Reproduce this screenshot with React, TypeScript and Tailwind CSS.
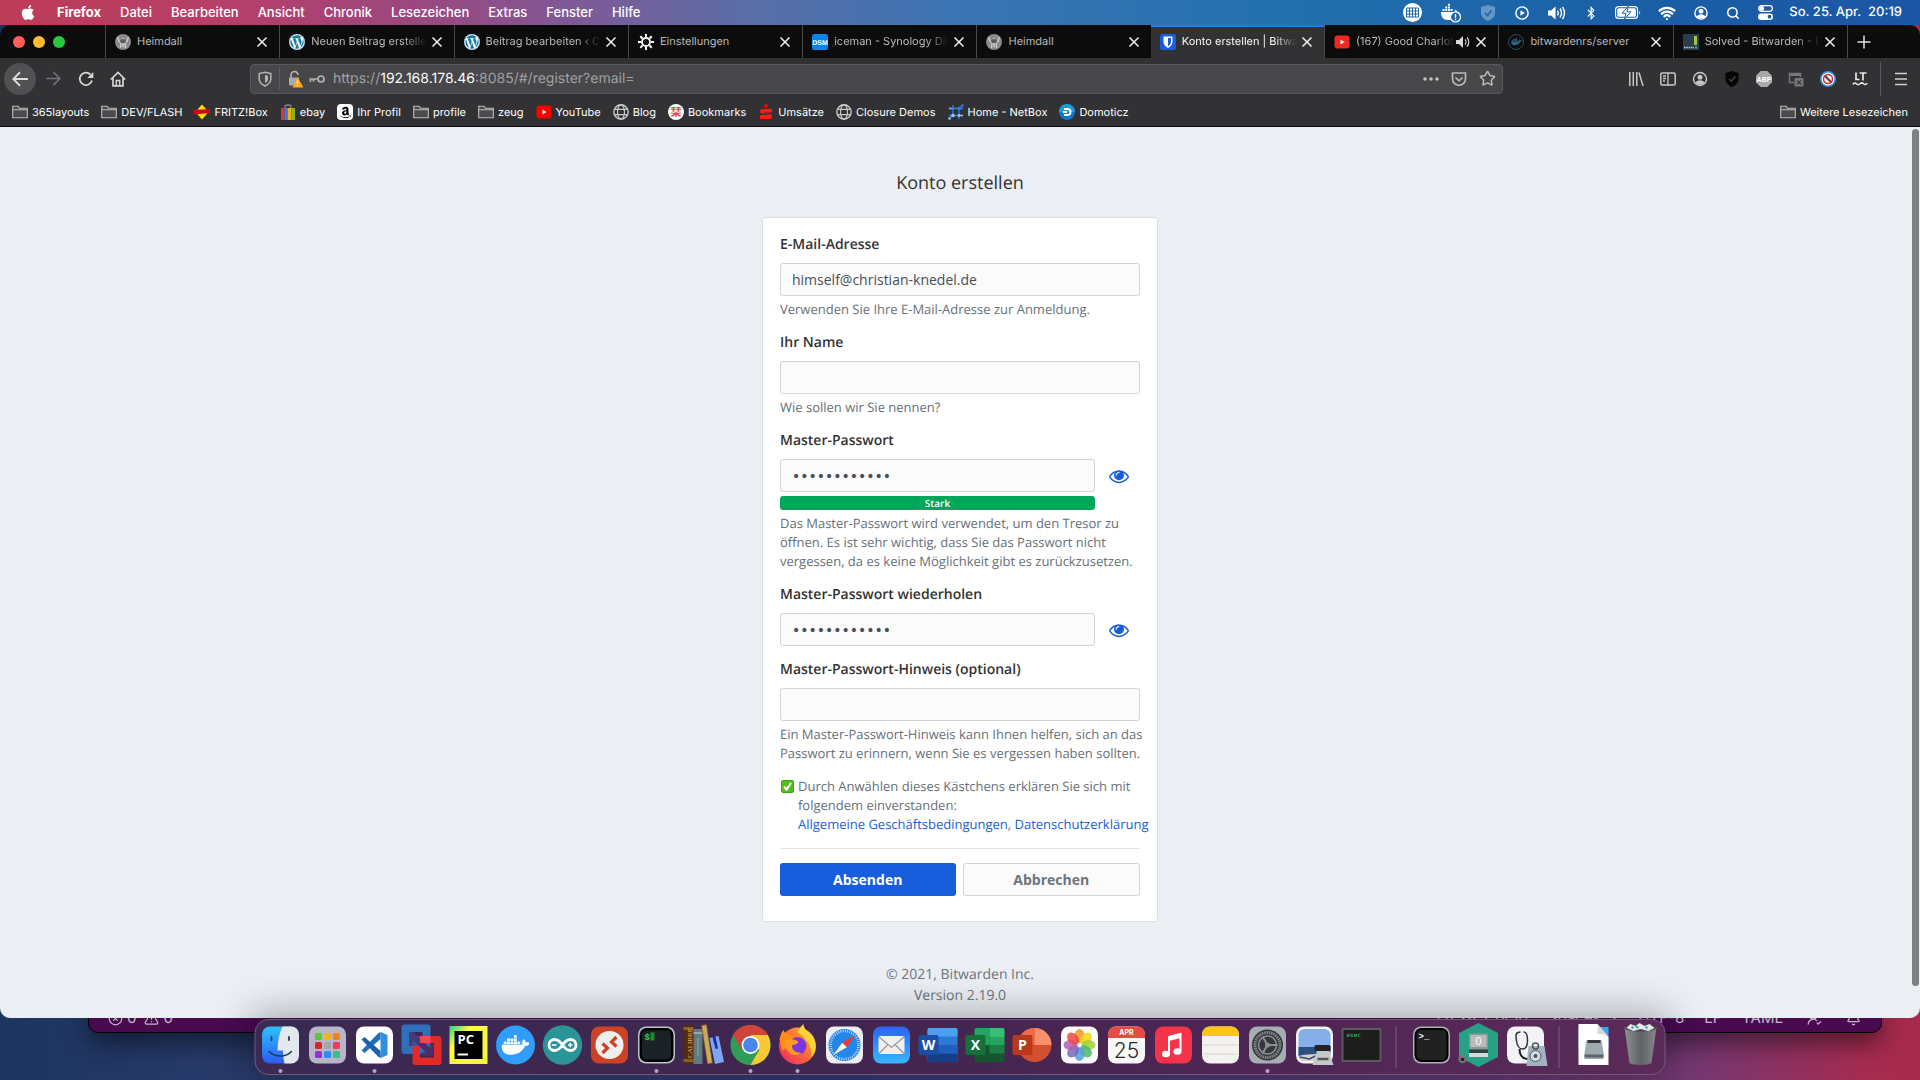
import { useState, type ReactNode } from 'react';
import { FaApple, FaWordpress, FaDocker, FaBluetoothB, FaAmazon } from 'react-icons/fa';
import { Wifi, Search, Star, Bell, CircleX, TriangleAlert, UserRoundCheck } from 'lucide-react';

/* ---------- small line icons ---------- */

const Svg = ({ children, size = 16, box = '0 0 16 16', className = '' }: { children: ReactNode; size?: number; box?: string; className?: string }) => (
  <svg width={size} height={size} viewBox={box} fill="none" className={`shrink-0 ${className}`} aria-hidden="true">
    {children}
  </svg>
);

const CloseIcon = () => (
  <Svg><path d="M3.5 3.5l9 9M12.5 3.5l-9 9" stroke="#f0f0f0" strokeWidth="1.5" /></Svg>
);

const SpeakerIcon = () => (
  <Svg>
    <path d="M1 6v4h3l4 4V2L4 6z" fill="#d8d8d8" />
    <path d="M10 5.500c1.300 1.300 1.300 3.700 0 5M12 3.500c2.400 2.400 2.400 6.600 0 9" stroke="#d8d8d8" strokeWidth="1.200" />
  </Svg>
);

const HelmetIcon = () => (
  <Svg>
    <circle cx="8" cy="8" r="8" fill="#8b8b8b" />
    <path d="M3 3c0 4 1 5 3 5.500L5.500 14M13 3c0 4-1 5-3 5.500l.5 5.500M8 4v9" stroke="#c9c9c9" strokeWidth="1.500" />
    <path d="M5 6.500c2-2 4-2 6 0l-.7 2.500H5.700z" fill="#5a5a5a" />
  </Svg>
);

const GearIcon = () => (
  <Svg>
    <circle cx="8" cy="8" r="4" stroke="#fff" strokeWidth="1.800" />
    <path d="M8 0v3M8 13v3M0 8h3M13 8h3M2.300 2.300l2.200 2.200M11.500 11.500l2.200 2.200M2.300 13.700l2.200-2.200M11.500 4.500l2.200-2.200" stroke="#fff" strokeWidth="2" />
  </Svg>
);

const DsmIcon = () => (
  <Svg>
    <rect width="16" height="16" rx="2" fill="#0a84e8" />
    <text x="8" y="10.500" fontSize="7" fontWeight="700" fill="#fff" textAnchor="middle" fontFamily="Liberation Sans, sans-serif">DSM</text>
  </Svg>
);

const WardenIcon = () => (
  <Svg>
    <rect width="16" height="16" rx="2.500" fill="#175ddc" />
    <path d="M3.500 2.500h9v5.500c0 3-2.500 4.800-4.500 6-2-1.200-4.500-3-4.500-6z" fill="#fff" />
    <path d="M8 4h3v4c0 2-1.500 3.200-3 4.200z" fill="#175ddc" />
  </Svg>
);

const YoutubeTile = ({ color = '#ee2a20' }: { color?: string }) => (
  <Svg>
    <rect x=".5" y="1.500" width="15" height="13" rx="3" fill={color} />
    <path d="M6.500 5.500v5l4-2.500z" fill="#fff" />
  </Svg>
);

const WhaleRing = () => (
  <span className="flex size-4 shrink-0 items-center justify-center rounded-full border border-[#2a4a5e] text-[#2f6384]">
    <FaDocker size={11} />
  </span>
);

const SolvedIcon = () => (
  <Svg>
    <rect width="16" height="16" fill="#2b3c4a" />
    <rect x="11" y="2" width="3" height="9" fill="#9bc53d" />
    <path d="M1 13.500h10" stroke="#c5ccd2" strokeWidth="1.500" strokeDasharray="1.500 .8" />
    <rect x="12" y="12.500" width="2" height="2" fill="#4aa3e0" />
  </Svg>
);

const FolderIcon = () => (
  <Svg>
    <path d="M.7 13.800V2.200h5.300l1.500 2h7.800v9.600z" fill="#4a4a4c" stroke="#bdbdbf" strokeWidth="1.100" />
    <path d="M.7 5.800h14.600" stroke="#bdbdbf" strokeWidth="1.100" />
  </Svg>
);

const GlobeIcon = () => (
  <Svg>
    <circle cx="8" cy="8" r="7.200" stroke="#c9c9cb" strokeWidth="1.400" />
    <ellipse cx="8" cy="8" rx="3.500" ry="7.200" stroke="#c9c9cb" strokeWidth="1.200" />
    <path d="M1.500 5.300h13M1.500 10.700h13" stroke="#c9c9cb" strokeWidth="1.200" />
  </Svg>
);

const FritzIcon = () => (
  <Svg>
    <path d="M8 .5L14.500 8 8 15.500 1.500 8z" fill="#ffe100" />
    <path d="M0 6l16-1v4L0 10.500z" fill="#e2001a" />
    <path d="M2 8.500l2-2M5 8.500l1-2M8 8.500l1-2M11 8.500l2-2.500" stroke="#7a1020" strokeWidth="1" />
  </Svg>
);

const BagIcon = () => (
  <Svg>
    <path d="M5 5V2.500C5 .5 11 .5 11 2.500V5" stroke="#8c8c8e" strokeWidth="1.300" />
    <path d="M1 4h3.500v12H1z" fill="#e53238" />
    <path d="M4.500 4H8v12H4.500z" fill="#3d7fe0" />
    <path d="M8 4h3.500v12H8z" fill="#f5af02" />
    <path d="M11.500 4H15v12h-3.500z" fill="#86b817" />
  </Svg>
);

const AmazonIcon = () => (
  <span className="flex size-4 shrink-0 items-center justify-center rounded-sm bg-white text-black"><FaAmazon size={13} /></span>
);

const ShioriIcon = () => (
  <Svg>
    <circle cx="8" cy="8" r="8" fill="#fff" />
    <text x="8" y="12" fontSize="11" fontWeight="700" fill="#e5484d" textAnchor="middle" fontFamily="Noto Sans CJK JP, sans-serif">栞</text>
  </Svg>
);

const SparkasseIcon = () => (
  <Svg>
    <circle cx="8" cy="2" r="2" fill="#f00" />
    <path d="M14 5H4.500C3 5 2 5.900 2 7.300S3 9.600 4.500 9.600h6v1.300H2V15h9.500c1.600 0 2.500-1 2.500-2.500s-.9-2.600-2.500-2.600H6V8.500h8z" fill="#ff1b10" />
  </Svg>
);

const NetboxIcon = () => (
  <Svg>
    <path d="M5 1v10.500M11 4.500V15M1 11.500h10.500M4.500 4.500H15M5 11.500l-3.500 3M11 4.500l3.500-3" stroke="#2f7fe0" strokeWidth="1.300" />
    <path d="M11 11.500h4M5 4.500H1" stroke="#8fc4ff" strokeWidth="1.300" />
    <circle cx="5" cy="11.500" r="1.800" fill="#8fc4ff" /><circle cx="11" cy="4.500" r="1.800" fill="#2f7fe0" />
    <circle cx="5" cy="4.500" r="1.400" fill="#2f7fe0" /><circle cx="11" cy="11.500" r="1.400" fill="#8fc4ff" />
    <circle cx="1.500" cy="14.500" r="1.300" fill="#8fc4ff" /><circle cx="14.500" cy="1.500" r="1.300" fill="#2f7fe0" />
  </Svg>
);

const DomoticzIcon = () => (
  <Svg>
    <circle cx="8" cy="8" r="8" fill="#0b78c8" />
    <path d="M0 8a8 8 0 0 1 16 0z" fill="#1d9ad8" />
    <path d="M5 5h3.500a3 3 0 0 1 0 6H5M4 8h4" stroke="#fff" strokeWidth="2" />
  </Svg>
);

const EyeIcon = () => (
  <svg width="20" height="20" viewBox="0 0 1792 1792" fill="#175ddc" aria-hidden="true">
    <path d="M1664 960q-152-236-381-353 61 104 61 225 0 185-131.500 316.500t-316.500 131.500-316.500-131.500-131.500-316.500q0-121 61-225-229 117-381 353 133 205 333.500 326.500t434.500 121.500 434.500-121.500 333.500-326.500zm-720-384q0-20-14-34t-34-14q-125 0-214.500 89.500t-89.500 214.500q0 20 14 34t34 14 34-14 14-34q0-86 61-147t147-61q20 0 34-14t14-34zm848 384q0 34-20 69-140 230-376.500 368.500t-499.500 138.500-499.500-139-376.500-368q-20-35-20-69t20-69q140-229 376.500-368t499.500-139 499.500 139 376.500 368q20 35 20 69z" />
  </svg>
);

/* ---------- system menu bar ---------- */

const MENUS = ['Datei', 'Bearbeiten', 'Ansicht', 'Chronik', 'Lesezeichen', 'Extras', 'Fenster', 'Hilfe'];

function MenuBar() {
  return (
    <header className="flex h-[25px] items-center justify-between bg-[linear-gradient(to_right,#be3c57_0%,#b53f69_12%,#9a4880_22%,#7a5c98_31%,#5a6ea8_39%,#3b74b4_50%,#2270ae_67%,#1a5fa6_85%,#1c56a5_100%)] pr-[18px] pl-[20px] text-[13px] text-white">
      <nav className="flex items-center gap-[19px] font-medium" aria-label="Menü">
        <button type="button" aria-label="Apple" className="mr-[2px] flex w-4 justify-center"><FaApple size={17} /></button>
        <button type="button" className="font-bold">Firefox</button>
        {MENUS.map((m) => <button type="button" key={m}>{m}</button>)}
      </nav>
      <div className="flex items-center gap-4">
        <span className="flex w-[22px] justify-center">
          <Svg size={19} box="0 0 19 19">
            <circle cx="9.500" cy="9.500" r="9.500" fill="#fff" />
            <path d="M3.500 5h12v9h-12zM3.500 8h12M3.500 11h12M6.500 5v9M9.500 5v9M12.500 5v9" stroke="#2368ab" strokeWidth="1" />
          </Svg>
        </span>
        <span className="flex w-6 justify-center">
          <Svg size={20} box="0 0 20 20">
            <path d="M0 9h13c1 0 1.500-1 1.300-2.500 1.200.6 1.700 1.500 1.700 2.200 1 0 1.700 0 2.500.5-.8 1.500-2 1.800-3.200 1.800-1.300 4-4.300 6-8.300 6C2 17 0 13.500 0 9z" fill="#fff" />
            <path d="M1.500 6h2v2h-2zM4.200 6h2v2h-2zM6.900 6h2v2h-2zM9.600 6h2v2h-2zM4.200 3.400h2v2h-2zM6.900 3.400h2v2h-2zM6.900.8h2v2h-2z" fill="#fff" />
            <circle cx="14.500" cy="14" r="5" fill="#1f66a9" stroke="#fff" strokeWidth="1.200" />
            <path d="M14.500 11v3.800M14.500 15.800v1.400" stroke="#fff" strokeWidth="1.400" />
          </Svg>
        </span>
        <span className="flex w-[18px] justify-center opacity-40">
          <Svg><path d="M8 0l7 2v6c0 4-3.500 6.500-7 8-3.500-1.500-7-4-7-8V2z" fill="#cfe0f0" /><path d="M5 8l2.500 2.500L11.500 5.500" stroke="#1d5fa0" strokeWidth="1.600" /></Svg>
        </span>
        <span className="flex w-[18px] justify-center">
          <Svg size={14}><circle cx="8" cy="8" r="7" stroke="#fff" strokeWidth="1.700" /><path d="M6.200 4.800v6.400L11.300 8z" fill="#fff" /></Svg>
        </span>
        <span className="flex w-5 justify-center">
          <Svg size={18} box="0 0 18 16">
            <path d="M0 5.500v5h3l4.500 4V1.500L3 5.500z" fill="#fff" />
            <path d="M9.500 5.500q1.500 2.500 0 5M12 3.500q3 4.500 0 9M14.500 2q4 6 0 12" stroke="#fff" strokeWidth="1.400" />
          </Svg>
        </span>
        <span className="flex w-4 justify-center"><FaBluetoothB size={14} /></span>
        <span className="flex w-[26px] justify-center">
          <svg width="26" height="13" viewBox="0 0 26 13" fill="none" aria-hidden="true">
            <rect x=".6" y=".6" width="22" height="11.800" rx="3" stroke="#fff" strokeWidth="1.100" />
            <rect x="2.300" y="2.300" width="18.600" height="8.400" rx="1.500" fill="#fff" />
            <path d="M13.500 0L7 7.200h4L9.500 13 16 5.800h-4z" fill="#fff" stroke="#2064a8" strokeWidth="1" />
            <path d="M24.300 4.500q1.600 2 0 4" fill="#fff" />
          </svg>
        </span>
        <span className="flex w-5 justify-center"><Wifi size={18} strokeWidth={3} /></span>
        <span className="flex w-4 justify-center">
          <Svg size={14}><circle cx="8" cy="8" r="7" stroke="#fff" strokeWidth="1.600" /><circle cx="8" cy="6" r="2.800" fill="#fff" /><path d="M3 12.500c1-4 9-4 10 0-2.500 2.500-7.500 2.500-10 0z" fill="#fff" /></Svg>
        </span>
        <span className="flex w-4 justify-center"><Search size={14} strokeWidth={2.600} /></span>
        <span className="flex w-4 justify-center">
          <Svg size={15}>
            <rect x=".7" y=".7" width="14.600" height="6" rx="3" stroke="#fff" strokeWidth="1.300" /><circle cx="4" cy="3.700" r="2.600" fill="#fff" />
            <rect x="0" y="9" width="16" height="7" rx="3.500" fill="#fff" /><circle cx="12.300" cy="12.500" r="2" fill="#1c5da5" />
          </Svg>
        </span>
        <span className="font-medium whitespace-pre">So. 25. Apr.  20:19</span>
      </div>
    </header>
  );
}

/* ---------- browser chrome ---------- */

type Tab = { title: string; icon: ReactNode; active?: boolean; sound?: boolean; fade?: boolean };

const wp = (
  <span className="flex size-4 shrink-0 rounded-full bg-white text-[#1779a5]"><FaWordpress size={16} /></span>
);

const TABS: Tab[] = [
  { title: 'Heimdall', icon: <HelmetIcon /> },
  { title: 'Neuen Beitrag erstellen', icon: wp, fade: true },
  { title: 'Beitrag bearbeiten ‹ Christian', icon: wp, fade: true },
  { title: 'Einstellungen', icon: <GearIcon /> },
  { title: 'iceman - Synology DiskStation', icon: <DsmIcon />, fade: true },
  { title: 'Heimdall', icon: <HelmetIcon /> },
  { title: 'Konto erstellen | Bitwarden', icon: <WardenIcon />, active: true, fade: true },
  { title: '(167) Good Charlotte', icon: <YoutubeTile />, sound: true, fade: true },
  { title: 'bitwardenrs/server', icon: <WhaleRing /> },
  { title: 'Solved - Bitwarden - Error', icon: <SolvedIcon />, fade: true },
];

function TabStrip() {
  return (
    <div className="flex h-[33px] bg-[#0c0c0d]">
      <div className="flex w-[105px] items-center gap-2 pl-[13px]">
        <span className="size-3 rounded-full bg-[#ff5f57]" />
        <span className="size-3 rounded-full bg-[#febc2e]" />
        <span className="size-3 rounded-full bg-[#28c840]" />
      </div>
      {TABS.map((t, i) => (
        <div
          key={i}
          className={`flex min-w-0 flex-1 items-center pr-[9px] pl-[9px] text-[11px] ${t.active ? 'border-t-2 border-t-[#0a84ff] bg-[#323234] pb-[2px] text-[#f9f9fa]' : 'border-l border-l-[#4a4a4b] text-[#b9b9ba]'}`}
        >
          {t.icon}
          <span className={`ml-[6px] min-w-0 flex-1 overflow-hidden whitespace-nowrap ${t.fade ? '[mask-image:linear-gradient(to_right,black_80%,transparent_100%)]' : ''}`}>{t.title}</span>
          {t.sound && <SpeakerIcon />}
          <button type="button" aria-label="Tab schließen" className="ml-[2px]"><CloseIcon /></button>
        </div>
      ))}
      <button type="button" aria-label="Neuer Tab" className="flex w-[73px] items-center border-l border-l-[#4a4a4b] pl-2">
        <Svg><path d="M8 1.500v13M1.500 8h13" stroke="#e0e0e0" strokeWidth="1.500" /></Svg>
      </button>
    </div>
  );
}

const TOOLBAR: { label: string; icon: ReactNode }[] = [
  { label: 'Bibliothek', icon: <Svg><path d="M1.800 1v14M5.300 1v14M8.800 1v14M11 1.500l4 13.500" stroke="#c8c8c9" strokeWidth="1.500" /></Svg> },
  { label: 'Seitenleiste', icon: <Svg><rect x=".8" y="2" width="14.400" height="12" rx="1.500" stroke="#c8c8c9" strokeWidth="1.500" /><path d="M8 2v12M3 5h3M3 7.500h3M3 10h2" stroke="#c8c8c9" strokeWidth="1.300" /></Svg> },
  { label: 'Konto', icon: <Svg><circle cx="8" cy="8" r="6.500" stroke="#c8c8c9" strokeWidth="1.400" /><circle cx="8" cy="6.300" r="2.500" fill="#c8c8c9" /><path d="M3.500 11.800c1-3.500 8-3.500 9 0-2 2.500-7 2.500-9 0z" fill="#c8c8c9" /></Svg> },
  { label: 'Schutz', icon: <Svg><path d="M8 0l6.500 2v6c0 4-3 6.500-6.500 8-3.500-1.500-6.500-4-6.500-8V2z" fill="#050505" /><path d="M5 8l2.300 2.300L11.500 5.500" stroke="#444" strokeWidth="1.400" /></Svg> },
  { label: 'Adblock', icon: <Svg><path d="M4.700 0h6.600L16 4.700v6.600L11.300 16H4.700L0 11.300V4.700z" fill="#a9a9aa" /><text x="8" y="10.700" fontSize="7" fontWeight="700" fill="#fff" textAnchor="middle" fontFamily="Liberation Sans, sans-serif">ABP</text></Svg> },
  { label: 'Fenster', icon: <Svg><path d="M6 11.500H1.500v-9h11V6" stroke="#777779" strokeWidth="1.500" /><path d="M1 4h12" stroke="#777779" strokeWidth="2" /><rect x="6.500" y="7" width="9" height="8.500" rx="1" fill="#777779" /><path d="M9 9.300l4 4M13 9.300l-4 4" stroke="#323234" strokeWidth="1.200" /></Svg> },
  { label: 'Blocker', icon: <Svg><circle cx="8" cy="8" r="7.200" fill="#fff" stroke="#3d8be0" strokeWidth="1.600" /><circle cx="8" cy="8" r="4.500" stroke="#c0392b" strokeWidth="1.500" /><path d="M5 5l6 6" stroke="#8a2430" strokeWidth="2" /></Svg> },
  { label: 'LanguageTool', icon: <Svg><path d="M4 1.500v7h3.500M7.500 2h7M11 2v7.500" stroke="#e8e8e8" strokeWidth="1.700" /><path d="M.8 13.500q1.800-2.500 3.600-.7t3.600 0 3.600 0 3.600-.7" stroke="#e8e8e8" strokeWidth="1.600" /></Svg> },
];

function NavBar() {
  return (
    <div className="flex h-[41px] items-center bg-[#323234] pl-1">
      <button type="button" aria-label="Zurück" className="flex size-8 items-center justify-center rounded-full bg-[#515153]">
        <Svg size={18}><path d="M15 8H2M8 2L2 8l6 6" stroke="#dcdcdd" strokeWidth="1.600" /></Svg>
      </button>
      <button type="button" aria-label="Vor" className="flex h-8 w-[34px] items-center justify-center">
        <Svg size={17}><path d="M1 8h13M8 2l6 6-6 6" stroke="#747476" strokeWidth="1.500" /></Svg>
      </button>
      <button type="button" aria-label="Neu laden" className="flex size-8 items-center justify-center">
        <Svg><path d="M14 9.500a6.200 6.200 0 1 1-1.600-6" stroke="#d5d5d6" strokeWidth="1.800" /><path d="M15.300 1v6H9.300z" fill="#d5d5d6" /></Svg>
      </button>
      <button type="button" aria-label="Startseite" className="flex size-8 items-center justify-center">
        <Svg><path d="M.8 8.500L8 1.500l7.200 7M3 7v7.800h10V7" stroke="#d5d5d6" strokeWidth="1.700" /><path d="M6.300 14.500V9.500h3.400v5" stroke="#d5d5d6" strokeWidth="1.500" /></Svg>
      </button>
      <div className="ml-[116px] flex h-[30px] min-w-0 flex-1 items-center rounded border border-[#59595b] bg-[#474749] px-[6px]">
        <Svg><path d="M8 1.200l5.800 1.300v5.500c0 3.500-2.800 5.500-5.800 7-3-1.500-5.800-3.500-5.800-7V2.500z" stroke="#b5b5b6" strokeWidth="1.500" /><path d="M8 4l3 .7V8c0 2-1.500 3.200-3 4z" fill="#b5b5b6" /></Svg>
        <span className="mx-[6px] h-[22px] w-px bg-[#5e5e62]" />
        <Svg size={18} box="0 0 18 18">
          <path d="M5 8V5a3.500 3.500 0 0 1 7 0" stroke="#b5b5b6" strokeWidth="1.700" /><rect x="3" y="7.500" width="10" height="8" rx="1" fill="#a9a9aa" />
          <path d="M11.500 7l6 10.500h-11z" fill="#ffa81c" /><path d="M11.500 10.500v3.500M11.500 15v1.300" stroke="#fff" strokeWidth="1.300" />
        </Svg>
        <Svg className="ml-[5px]"><circle cx="12" cy="8" r="3" stroke="#b5b5b6" strokeWidth="1.700" /><path d="M9 8H.5M1.500 8v3M4.500 8v2.500" stroke="#b5b5b6" strokeWidth="1.700" /></Svg>
        <span className="ml-[8px] min-w-0 flex-1 truncate text-[14px] text-[#a0a0a2]">https://<span className="text-[#f9f9fa]">192.168.178.46</span>:8085/#/register?email=</span>
        <div className="flex items-center gap-3">
          <Svg><circle cx="2" cy="8" r="1.800" fill="#c4c4c5" /><circle cx="8" cy="8" r="1.800" fill="#c4c4c5" /><circle cx="14" cy="8" r="1.800" fill="#c4c4c5" /></Svg>
          <Svg><path d="M1.500 2h13v6c0 3.500-3 6.300-6.500 6.300S1.500 11.500 1.500 8z" stroke="#b9b9ba" strokeWidth="1.700" /><path d="M4.500 6.500L8 9.800l3.500-3.300" stroke="#b9b9ba" strokeWidth="1.700" /></Svg>
          <Star size={17} strokeWidth={2.200} color="#b9b9ba" />
        </div>
      </div>
      <div className="ml-[125px] flex items-center gap-4">
        {TOOLBAR.map((t) => <button type="button" key={t.label} aria-label={t.label}>{t.icon}</button>)}
      </div>
      <span className="ml-3 h-[34px] w-px bg-[#5a5a5c]" />
      <button type="button" aria-label="Menü öffnen" className="mr-[11px] ml-[12px]">
        <Svg><path d="M2 2.500h12M2 8h12M2 13.500h12" stroke="#d0d0d1" strokeWidth="1.700" /></Svg>
      </button>
    </div>
  );
}

const BOOKMARKS: { label: string; icon: ReactNode }[] = [
  { label: '365layouts', icon: <FolderIcon /> },
  { label: 'DEV/FLASH', icon: <FolderIcon /> },
  { label: 'FRITZ!Box', icon: <FritzIcon /> },
  { label: 'ebay', icon: <BagIcon /> },
  { label: 'Ihr Profil', icon: <AmazonIcon /> },
  { label: 'profile', icon: <FolderIcon /> },
  { label: 'zeug', icon: <FolderIcon /> },
  { label: 'YouTube', icon: <YoutubeTile color="#ff0000" /> },
  { label: 'Blog', icon: <GlobeIcon /> },
  { label: 'Bookmarks', icon: <ShioriIcon /> },
  { label: 'Umsätze', icon: <SparkasseIcon /> },
  { label: 'Closure Demos', icon: <GlobeIcon /> },
  { label: 'Home - NetBox', icon: <NetboxIcon /> },
  { label: 'Domoticz', icon: <DomoticzIcon /> },
];

function BookmarkBar() {
  return (
    <div className="flex h-7 items-center gap-3 border-b border-[#0c0c0d] bg-[#323234] px-3 pb-px text-[11px] text-[#ffffff]">
      {BOOKMARKS.map((b) => (
        <a key={b.label} href="#" className="flex items-center gap-1 whitespace-nowrap">{b.icon}{b.label}</a>
      ))}
      <a href="#" className="ml-auto flex items-center gap-1 whitespace-nowrap"><FolderIcon />Weitere Lesezeichen</a>
    </div>
  );
}

/* ---------- registration page ---------- */

const inputClass = 'block h-[33px] w-full rounded-[3px] border border-[#ced4dc] bg-[#fbfbfb] px-[11px] text-[14px] text-[#465057] outline-none';
const labelClass = 'mb-2 block text-[14px] leading-5 font-semibold text-[#333]';
const hintClass = 'mt-1 whitespace-nowrap text-[13px] leading-[19px] text-[#667079]';

function PasswordField({ id, label, meter, children }: { id: string; label: string; meter?: boolean; children?: ReactNode }) {
  const [shown, setShown] = useState(false);
  return (
    <div>
      <label htmlFor={id} className={labelClass}>{label}</label>
      <div className="flex">
        <div className="flex-1">
          <input id={id} type={shown ? 'text' : 'password'} defaultValue="abcdefghijkl" className={`${inputClass} font-['DejaVu_Sans',sans-serif]`} />
          {meter && <div className="mt-1 h-[14px] rounded-[3px] bg-[#00a65a] text-center text-[10px] leading-[14px] font-semibold text-white">Stark</div>}
        </div>
        <button type="button" aria-label="Passwort anzeigen" onClick={() => setShown(!shown)} className="flex h-[33px] w-[45px] items-center justify-end pr-[11px]"><EyeIcon /></button>
      </div>
      {children}
    </div>
  );
}

function RegisterForm() {
  return (
    <form className="mx-auto w-[396px] rounded-[3px] border border-[#dcdfe4] bg-white px-[17px] pt-[17px] pb-[25px]" onSubmit={(e) => e.preventDefault()}>
      <div className="flex flex-col gap-[14px]">
        <div>
          <label htmlFor="email" className={labelClass}>E-Mail-Adresse</label>
          <input id="email" type="email" defaultValue="himself@christian-knedel.de" className={inputClass} />
          <p className={hintClass}>Verwenden Sie Ihre E-Mail-Adresse zur Anmeldung.</p>
        </div>
        <div>
          <label htmlFor="name" className={labelClass}>Ihr Name</label>
          <input id="name" type="text" className={inputClass} />
          <p className={hintClass}>Wie sollen wir Sie nennen?</p>
        </div>
        <PasswordField id="pw" label="Master-Passwort" meter>
          <p className={hintClass}>Das Master-Passwort wird verwendet, um den Tresor zu<br />öffnen. Es ist sehr wichtig, dass Sie das Passwort nicht<br />vergessen, da es keine Möglichkeit gibt es zurückzusetzen.</p>
        </PasswordField>
        <PasswordField id="pw2" label="Master-Passwort wiederholen" />
        <div>
          <label htmlFor="hint" className={labelClass}>Master-Passwort-Hinweis (optional)</label>
          <input id="hint" type="text" className={inputClass} />
          <p className={hintClass}>Ein Master-Passwort-Hinweis kann Ihnen helfen, sich an das<br />Passwort zu erinnern, wenn Sie es vergessen haben sollten.</p>
        </div>
        <div className="flex text-[13px] leading-[19px] text-[#667079]">
          <span className="relative mt-[3px] mr-[4px] ml-px size-[13px] shrink-0">
            <input id="terms" type="checkbox" defaultChecked className="block size-[13px] appearance-none rounded-[2px] border border-[#3aa80f] bg-[#55bd22]" />
            <Svg size={13} box="0 0 13 13" className="pointer-events-none absolute inset-0"><path d="M3 6.500l2.500 3L10 3" stroke="#fff" strokeWidth="2" /></Svg>
          </span>
          <div className="whitespace-nowrap">
            <label htmlFor="terms">Durch Anwählen dieses Kästchens erklären Sie sich mit<br />folgendem einverstanden:</label>
            <div><a href="#" className="text-[#175ddc]">Allgemeine Geschäftsbedingungen</a>, <a href="#" className="text-[#175ddc]">Datenschutzerklärung</a></div>
          </div>
        </div>
      </div>
      <hr className="my-[14px] border-[#e2e3e5]" />
      <div className="flex gap-[7px] text-[14px] font-bold">
        <button type="submit" className="h-[33px] flex-1 rounded-[3px] bg-[#175ddc] text-white">Absenden</button>
        <button type="button" className="h-[33px] flex-1 rounded-[3px] border border-[#ced4dc] bg-[#fbfbfb] text-[#6c757d]">Abbrechen</button>
      </div>
    </form>
  );
}

function Page() {
  return (
    <main className="flex flex-1 bg-[#ebeef3] font-['Open_Sans',sans-serif]">
      <div className="flex-1 pt-[44px] text-center">
        <h1 className="mb-[22px] text-[18px] leading-6 text-[#333]">Konto erstellen</h1>
        <div className="text-left"><RegisterForm /></div>
        <footer className="mt-[42px] text-[14px] leading-[21px] text-[#6c757d]">© 2021, Bitwarden Inc.<br />Version 2.19.0</footer>
      </div>
      <div className="absolute top-[104px] right-px bottom-8 w-[7px] rounded-full bg-[#7d7f81]" />
    </main>
  );
}

/* ---------- dock ---------- */

const Tile = ({ fill, children }: { fill: string; children?: ReactNode }) => (
  <><rect x="1.500" y="3.500" width="37" height="37" rx="8" fill={fill} />{children}</>
);

const squares = ['#55c936', '#f3b321', '#f0851e', '#d42a26', '#a4a6ab', '#f5385a', '#8e35d8', '#2a8ef5', '#35c287'];
const petals = ['#f7941d', '#f1d80d', '#a4ce39', '#4db76a', '#4fa0dc', '#7a68bd', '#b55cae', '#ef4a44'];

const LETTER = 'Open Sans, sans-serif';

const Office = ({ dark, mid, a, b, c, letter }: { dark: string; mid: string; a: string; b: string; c: string; letter: string }) => (
  <>
    <rect x="9" y="5" width="30" height="34" rx="2" fill={b} />
    <path d="M9 7a2 2 0 0 1 2-2h26a2 2 0 0 1 2 2v6.500H9z" fill={a} />
    <rect x="9" y="22" width="30" height="8.500" fill={mid} />
    <path d="M9 30.500h30V37a2 2 0 0 1-2 2H11a2 2 0 0 1-2-2z" fill={c} />
    <rect x="0" y="12" width="20" height="20" rx="2" fill={dark} />
    <text x="10" y="27" fontSize="14" fontWeight="700" fill="#fff" textAnchor="middle" fontFamily={LETTER}>{letter}</text>
  </>
);

type DockItem = { name: string; art: ReactNode; running?: boolean };

const APPS: DockItem[] = [
  { name: 'Finder', running: true, art: (
    <><Tile fill="url(#finder)" />
      <path d="M22 3.500h8.500a8 8 0 0 1 8 8v21a8 8 0 0 1-8 8H24c-1-4-1.500-8-1.500-13H17C17 18 19 10 22 3.500z" fill="#e3e8ef" />
      <path d="M11 14v3M28.500 14v3" stroke="#22384f" strokeWidth="1.800" strokeLinecap="round" />
      <path d="M8.500 28.500c6 6 17 6 22.500 0" stroke="#22384f" strokeWidth="1.500" fill="none" strokeLinecap="round" /></>
  ) },
  { name: 'Launchpad', art: <Tile fill="#b9b4c6">{squares.map((c, i) => <rect key={c} x={7.5 + (i % 3) * 9} y={10 + Math.floor(i / 3) * 9} width="7" height="7" rx="1.500" fill={c} />)}</Tile> },
  { name: 'Visual Studio Code', running: true, art: (
    <Tile fill="#fff"><path d="M26 9l7 3v20l-7 3z" fill="#2f8fe0" /><path d="M26 9v7L10 30l-3-2.500L24 10z" fill="#1f6fbe" /><path d="M26 35v-7L10 14l-3 2.500L24 34z" fill="#1a62ab" /></Tile>
  ) },
  { name: 'VMware Fusion', art: (
    <>
      <path fillRule="evenodd" d="M3 1.500h23a3 3 0 0 1 3 3V28a3 3 0 0 1-3 3H3a3 3 0 0 1-3-3V4.500a3 3 0 0 1 3-3zM8 9v14h13V9z" fill="#2f70bb" />
      <path fillRule="evenodd" d="M14 13h23a3 3 0 0 1 3 3v23a3 3 0 0 1-3 3H14a3 3 0 0 1-3-3V16a3 3 0 0 1 3-3zM18.500 20v14.500h14V20z" fill="#e02b29" />
      <path d="M11 13h10v10H11z" fill="#2a5aa5" />
      <path d="M8 23l0-14 4 0 16 15.500V21h3.500v12H20v-3.500h4L11 16v7z" fill="#413a78" />
      <path d="M18.500 13H29v-1l0 8H18.500z" fill="#ee4b47" />
      <path d="M19 20h4l6 6v-5h3v12H20v-3h5l-7-7z" fill="#4a2f66" />
    </>
  ) },
  { name: 'PyCharm', art: (
    <><rect x="1" y="3" width="38" height="38" fill="url(#pycharm)" /><rect x="6" y="8" width="28" height="28" fill="#000" />
      <text x="9" y="21" fontSize="13" fontWeight="700" fill="#fff" fontFamily={LETTER}>PC</text><path d="M9 31.500h10.500" stroke="#fff" strokeWidth="2" /></>
  ) },
  { name: 'Docker', art: <><circle cx="20" cy="22" r="19.500" fill="#2f9dfb" /><g transform="translate(6 8)"><FaDocker size={28} color="#fff" /></g></> },
  { name: 'Arduino', art: (
    <><circle cx="20" cy="22" r="19.700" fill="#2b9499" /><path d="M20 22c-3-4.500-5-5.500-8-5.500a5.500 5.500 0 0 0 0 11c3 0 5-1 8-5.500s5-5.500 8-5.500a5.500 5.500 0 0 1 0 11c-3 0-5-1-8-5.500z" stroke="#fff" strokeWidth="2.800" fill="none" />
      <path d="M9.500 22h4.500M25.500 22H30M27.800 19.800v4.400" stroke="#fff" strokeWidth="1.400" /></>
  ) },
  { name: 'Remote Desktop', art: <Tile fill="#cb4324"><circle cx="20" cy="22" r="14" fill="#f1efee" /><path d="M13 20.500l5 4.500-5 5M27 14l-5 5 5 4.500" stroke="#cb4324" strokeWidth="3.200" fill="none" /></Tile> },
  { name: 'iTerm', running: true, art: (
    <><Tile fill="#b9c6c9" /><rect x="3" y="5" width="34" height="34" rx="7" fill="#000" /><rect x="5.500" y="7.500" width="29" height="29" rx="4.500" fill="#1a2127" />
      <text x="8" y="17" fontSize="9" fontWeight="700" fill="#2fd445" fontFamily="Liberation Mono, monospace">$</text><rect x="14" y="9.500" width="4" height="8" fill="#1d8a2a" /></>
  ) },
  { name: 'Calibre', art: (
    <><rect x="0" y="2" width="10" height="39" fill="#4f2c12" /><rect x="0" y="4" width="10" height="3" fill="#8a5d22" /><rect x="0" y="36" width="10" height="3" fill="#8a5d22" />
      <text transform="translate(8 35) rotate(-90)" fontSize="7" fill="#e6b54a" fontFamily="Liberation Serif, serif">CALIBRE</text>
      <rect x="10" y="6" width="9" height="35" fill="#5f7b80" /><rect x="10" y="9" width="9" height="2" fill="#93a9ab" /><path d="M14.500 15v18" stroke="#93a9ab" />
      <path d="M18 2.500l5-1L29 40l-5 1z" fill="#caa95e" stroke="#6b5423" strokeWidth=".7" /><path d="M26 15l9-2 5.500 26-9 2z" fill="#7fa6f5" /><path d="M29 14.300l3-.7 2.500 12-2.500.5z" fill="#1c2f9e" /></>
  ) },
  { name: 'Chrome', running: true, art: (
    <><circle cx="20" cy="22" r="20" fill="#2f9e55" /><path d="M20 22L2.700 12A20 20 0 0 1 37.300 12z" fill="#cf4339" /><path d="M20 12h17.300A20 20 0 0 1 20 42l8.700-15z" fill="#f8c935" />
      <path d="M2.700 12L11.300 27 20 22V12h17.300A20 20 0 0 0 2.700 12z" fill="#cf4339" /><circle cx="20" cy="22" r="9" fill="#fff" /><circle cx="20" cy="22" r="7.300" fill="#4a86ea" /></>
  ) },
  { name: 'Firefox', running: true, art: (
    <><circle cx="20" cy="23" r="18.500" fill="url(#fox)" /><path d="M20 9c2-4 4-6 6-8 0 5 4 7 8 11 6 7 5 17 0 22 1-12-6-19-14-25z" fill="#ffd43a" />
      <path d="M2 16c1-4 2-7 4-9 1 3 3 4 6 4l6 4-4 5-9 8z" fill="#ff8a1e" /><circle cx="20" cy="23" r="9" fill="#7a37e0" /><path d="M7 17c5-2 9-1 13 1 2 1-1 4-5 4-2 4 3 8 9 8-7 5-17 1-17-13z" fill="#ff9a22" /></>
  ) },
  { name: 'Safari', art: (
    <Tile fill="#eceef0"><circle cx="20" cy="22" r="16" fill="#2487e8" /><circle cx="20" cy="22" r="14" fill="none" stroke="#d9ecff" strokeWidth="2.500" strokeDasharray=".8 1.400" />
      <path d="M31 12L17.700 19.700l4.600 4.600z" fill="#f2382f" /><path d="M9 32l8.700-12.300 4.600 4.600z" fill="#fff" /></Tile>
  ) },
  { name: 'Mail', art: <Tile fill="url(#mail)"><rect x="7" y="13" width="26" height="18" rx="2" fill="#f0f0f0" /><path d="M7.500 14L20 24.500 32.500 14M7.500 30.500l9-9M32.500 30.500l-9-9" stroke="#9a9a9c" strokeWidth="1.200" fill="none" /></Tile> },
  { name: 'Word', art: <Office letter="W" dark="#1b4fa5" a="#4ba0ee" b="#2d7ad6" mid="#1f5fc0" c="#163d86" /> },
  { name: 'Excel', art: <><rect x="9" y="5" width="30" height="34" rx="2" fill="#17552f" /><path d="M9 7a2 2 0 0 1 2-2h13v17H9z" fill="#26a35f" /><path d="M24 5h13a2 2 0 0 1 2 2v7H24z" fill="#36bf77" /><path d="M24 14h15v8H24z" fill="#26a35f" /><path d="M24 22h15v8.500H24z" fill="#1c7f47" /><rect x="0" y="12" width="20" height="20" rx="2" fill="#15703b" /><text x="10" y="27" fontSize="14" fontWeight="700" fill="#fff" textAnchor="middle" fontFamily={LETTER}>X</text></> },
  { name: 'PowerPoint', art: (
    <><circle cx="22" cy="22" r="17" fill="#d25030" /><path d="M22 5a17 17 0 0 1 17 17H22z" fill="#fb8e6c" /><path d="M22 5v17H5A17 17 0 0 1 22 5z" fill="#ee6c45" />
      <rect x="0" y="12" width="20" height="20" rx="2" fill="#b93a1b" /><text x="10" y="27" fontSize="14" fontWeight="700" fill="#fff" textAnchor="middle" fontFamily={LETTER}>P</text></>
  ) },
  { name: 'Fotos', art: <Tile fill="#fbfbfb">{petals.map((c, i) => <ellipse key={c} cx="20" cy="13" rx="5" ry="7" fill={c} opacity=".85" transform={`rotate(${i * 45} 20 22)`} />)}</Tile> },
  { name: 'Kalender', art: (
    <><Tile fill="#f8f8f8" /><path d="M1.500 15v-3.500a8 8 0 0 1 8-8h21a8 8 0 0 1 8 8V15z" fill="#e64a40" />
      <text x="20" y="12" fontSize="7" fontWeight="700" fill="#fff" textAnchor="middle" fontFamily="Inter, sans-serif">APR</text>
      <text x="20" y="35" fontSize="21" fontWeight="300" fill="#2a2a2a" textAnchor="middle" fontFamily="Inter, sans-serif">25</text></>
  ) },
  { name: 'Musik', art: <Tile fill="#f5344c"><path d="M15.500 31V14L27 11v17" stroke="#fff" strokeWidth="2" fill="none" /><path d="M15.500 13L27 10v5l-11.500 3z" fill="#fff" /><ellipse cx="12.500" cy="31" rx="4" ry="3.300" fill="#fff" /><ellipse cx="24" cy="28.500" rx="4" ry="3.300" fill="#fff" /></Tile> },
  { name: 'Notizen', art: <Tile fill="#f4f2ef"><path d="M1.500 13v-1.500a8 8 0 0 1 8-8h21a8 8 0 0 1 8 8V13z" fill="#fcc417" /><path d="M2 22h36M2 31h36" stroke="#d9d6d2" /></Tile> },
  { name: 'Systemeinstellungen', running: true, art: (
    <Tile fill="#a7aeb3"><circle cx="20" cy="22" r="15.500" fill="#35373a" /><circle cx="20" cy="22" r="12.500" fill="none" stroke="#85888b" strokeWidth="3" strokeDasharray="1.500 .8" /><circle cx="20" cy="22" r="9" fill="none" stroke="#8d9093" strokeWidth="1.500" />
      <path d="M20 22h10M20 22l-5 8.500M20 22l-5-8.500" stroke="#8d9093" strokeWidth="2" /><circle cx="20" cy="22" r="2.500" fill="#8d9093" /></Tile>
  ) },
  { name: 'Vorschau', art: (
    <Tile fill="#f2f4f6"><rect x="4" y="6" width="32" height="32" rx="6" fill="#86aee8" /><path d="M4 25h32v7a6 6 0 0 1-6 6H10a6 6 0 0 1-6-6z" fill="#d9d0c2" /><path d="M4 24h32v5c-8 3-20 1-32 4z" fill="#2a4f80" /><path d="M5 34l10 2 6-3" stroke="#2a4f80" strokeWidth="1.500" />
      <path d="M22 26h13l0 4 4 12H18l4-12z" fill="#c3c7ca" /><rect x="20" y="22" width="16" height="6" rx="1.500" fill="#222" /><path d="M23 36h11" stroke="#555" strokeWidth="2.500" /></Tile>
  ) },
  { name: 'exec', art: <><rect x="0" y="5" width="40" height="34" rx="1.500" fill="#5c5a60" /><rect x="2" y="7" width="36" height="30" fill="#1d1d1d" /><text x="5" y="14" fontSize="6" fill="#3ed05a" fontFamily="DejaVu Sans Mono, monospace">exec</text></> },
];

const UTILITIES: DockItem[] = [
  { name: 'Terminal', art: <><Tile fill="#a9b0bd" /><rect x="3" y="5" width="34" height="34" rx="7" fill="#000" /><rect x="5" y="7" width="30" height="30" rx="5" fill="#212122" /><text x="7" y="16" fontSize="9" fontWeight="700" fill="#eee" fontFamily="Liberation Mono, monospace">&gt;_</text></> },
  { name: 'Backup', art: (
    <><path d="M20 0l19.500 10v24L20 44 .5 34V10z" fill="#27a084" /><rect x="10.500" y="10.500" width="19" height="16" fill="#8f9594" /><rect x="12" y="12" width="16" height="12" fill="#b8bdbc" />
      <text x="20" y="22" fontSize="11" fill="#fff" textAnchor="middle" fontFamily={LETTER}>0</text><rect x="10.500" y="26.500" width="19" height="3.500" fill="#2c4743" /><rect x="10.500" y="30" width="19" height="4" fill="#d5dad9" />
      <circle cx="4" cy="36" r="4" fill="#777" /><rect x="2.300" y="35" width="3.400" height="3" fill="#222" /></>
  ) },
  { name: 'Festplattendienstprogramm', art: (
    <Tile fill="#f1f3f6"><path d="M15 9c-5 0-5 3-4 9s3 8 6 8 5-3 5-9-1-8-4-8" stroke="#333" strokeWidth="1.500" fill="none" /><path d="M14 26c0 7 3 10 9 10" stroke="#222" strokeWidth="2" fill="none" />
      <path d="M23 23h16l3 20H21z" fill="#a3b3bd" /><circle cx="30" cy="33" r="5.500" fill="#d3dbe0" stroke="#4b565e" /><circle cx="30" cy="33" r="2" fill="#4b565e" /><circle cx="30" cy="23" r="3" fill="none" stroke="#4b565e" strokeWidth="1.500" /></Tile>
  ) },
];

const FILES: DockItem[] = [
  { name: 'Datei', art: (
    <><path d="M5 4h30v22H5z" fill="#3fa4ee" /><path d="M5 1h19l11 13v28H5z" fill="#fff" /><path d="M24 1c1 5 0 8-1 10 4-1 8 0 12 3z" fill="#d4d6d8" />
      <path d="M13 17h15l2 13v6H11v-6z" fill="#9faab0" /><rect x="14" y="17" width="13" height="3" fill="#33393d" /><path d="M11 33h19" stroke="#5b666c" strokeWidth="3" /></>
  ) },
  { name: 'Papierkorb', art: (
    <><path d="M4 4l32 0-5 36c-3 2.500-19 2.500-22 0z" fill="url(#bin)" /><ellipse cx="20" cy="5" rx="16" ry="3.500" fill="#4b4d50" />
      <path d="M6 5l4-4 5 2 4-3 5 3 5-2 5 4-6 3-8-2-7 2z" fill="#e8e8e8" /><path d="M15 3l3 2M25 4l2 1M11 4l2 1" stroke="#3aa0b8" strokeWidth="2" /></>
  ) },
];

const DockIcon = ({ item }: { item: DockItem }) => (
  <button type="button" aria-label={item.name} className="flex w-[47px] flex-col items-center gap-[2px] pt-[3px]">
    <svg width="40" height="44" viewBox="0 0 40 44" className="overflow-visible" fill="none" aria-hidden="true">{item.art}</svg>
    {item.running && <span className="size-1 rounded-full bg-[#b7a3cc]" />}
  </button>
);

function Dock() {
  return (
    <div className="absolute bottom-[5px] left-1/2 z-20 flex h-14 -translate-x-1/2 rounded-[14px] border border-[#73567f] bg-[linear-gradient(to_right,#3a2a52,#41264f_40%,#4d2653_70%,#5b2b58)] px-px shadow-[0_0_36px_8px_rgba(0,0,0,0.28)]">
      <svg width="0" height="0" className="absolute" aria-hidden="true">
        <defs>
          <linearGradient id="finder" x1="0" y1="0" x2="0" y2="1"><stop offset="0" stopColor="#2fc0fb" /><stop offset="1" stopColor="#2b5cf5" /></linearGradient>
          <linearGradient id="pycharm" x1="0" y1="0" x2="1" y2="1"><stop offset="0" stopColor="#21d789" /><stop offset=".3" stopColor="#fcf84a" /><stop offset="1" stopColor="#f4f53c" /></linearGradient>
          <linearGradient id="mail" x1="0" y1="0" x2="0" y2="1"><stop offset="0" stopColor="#2c62f2" /><stop offset="1" stopColor="#35b8fb" /></linearGradient>
          <linearGradient id="fox" x1="1" y1="0" x2="0" y2="1"><stop offset="0" stopColor="#ffc22e" /><stop offset=".5" stopColor="#ff6a35" /><stop offset="1" stopColor="#e8206a" /></linearGradient>
          <linearGradient id="bin" x1="0" y1="0" x2="1" y2="0"><stop offset="0" stopColor="#8f9194" /><stop offset=".5" stopColor="#606265" /><stop offset="1" stopColor="#85878a" /></linearGradient>
        </defs>
      </svg>
      {APPS.map((a) => <DockIcon key={a.name} item={a} />)}
      <span className="mx-[11px] my-[6px] w-px bg-[#7b5f86]" />
      {UTILITIES.map((a) => <DockIcon key={a.name} item={a} />)}
      <span className="mx-[10px] my-[6px] w-px bg-[#7b5f86]" />
      {FILES.map((a) => <DockIcon key={a.name} item={a} />)}
    </div>
  );
}

/* ---------- editor window peeking out below the browser ---------- */

function EditorStatusBar() {
  return (
    <div className="-mt-[15px] mr-[38px] ml-[88px] flex h-[30px] items-center justify-between rounded-b-[10px] border border-black bg-[#490a50] pr-5 pl-[19px] text-[15px] text-[#c9b6cc] shadow-[0_10px_24px_rgba(0,0,0,0.5)]">
      <div className="flex items-center gap-1"><CircleX size={15} /><span>0</span><TriangleAlert size={15} className="ml-1" /><span>0</span></div>
      <div className="flex items-center gap-5"><span>Ln 28, Col 10</span><span>Spaces: 2</span><span>UTF-8</span><span>LF</span><span>YAML</span><UserRoundCheck size={15} className="mx-1" /><Bell size={15} /></div>
    </div>
  );
}

export default function App() {
  return (
    <div className="relative flex min-h-screen flex-col overflow-hidden bg-[linear-gradient(to_right,#1c3560_0%,#2b3b6c_14%,#383a74_50%,#5c3a74_72%,#743873_88%,#a52c50_97%,#a82a4c_100%)] font-['Inter',sans-serif] [text-rendering:geometricPrecision]">
      <MenuBar />
      <div className="relative z-10 flex flex-1 flex-col overflow-hidden rounded-[10px]">
        <TabStrip />
        <NavBar />
        <BookmarkBar />
        <Page />
      </div>
      <div className="h-[62px]">
        <EditorStatusBar />
      </div>
      <Dock />
    </div>
  );
}
